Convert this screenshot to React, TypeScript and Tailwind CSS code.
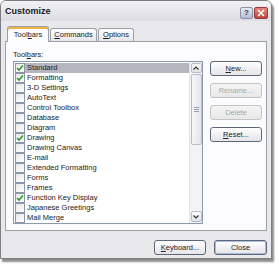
import React from "react"

const items: { name: string; checked: boolean }[] = [
  { name: "Standard", checked: true },
  { name: "Formatting", checked: true },
  { name: "3-D Settings", checked: false },
  { name: "AutoText", checked: false },
  { name: "Control Toolbox", checked: false },
  { name: "Database", checked: false },
  { name: "Diagram", checked: false },
  { name: "Drawing", checked: true },
  { name: "Drawing Canvas", checked: false },
  { name: "E-mail", checked: false },
  { name: "Extended Formatting", checked: false },
  { name: "Forms", checked: false },
  { name: "Frames", checked: false },
  { name: "Function Key Display", checked: true },
  { name: "Japanese Greetings", checked: false },
  { name: "Mail Merge", checked: false },
]

function Check({ on }: { on: boolean }) {
  return (
    <div className="w-[10px] h-[10px] shrink-0 border border-[#8b97a8] bg-gradient-to-br from-[#e8e8e8] to-white flex items-center justify-center">
      {on && (
        <svg width="8" height="8" viewBox="0 0 8 8">
          <path d="M1 4 L3 6 L7 1.5" stroke="#2f9a2f" strokeWidth="1.6" fill="none" />
        </svg>
      )}
    </div>
  )
}

function Btn({
  children,
  disabled,
  primary,
  className = "",
}: {
  children: React.ReactNode
  disabled?: boolean
  primary?: boolean
  className?: string
}) {
  return (
    <div
      className={
        "h-[15px] rounded-[3px] border flex items-center justify-center bg-gradient-to-b " +
        (disabled
          ? "border-[#c4c4c4] from-[#f4f4f4] to-[#e8e8e8] text-[#a8a8a8] "
          : "border-[#5d6777] from-white to-[#e4e4ea] text-[#222] ") +
        (primary ? "shadow-[inset_0_0_0_1px_#a9bddc] " : "") +
        className
      }
    >
      {children}
    </div>
  )
}

export default function App() {
  return (
    <div
      className="w-[279px] h-[266px] bg-white text-[7.5px] leading-[10px] text-[#1a1a1a]"
      style={{ fontFamily: '"Liberation Sans", Arial, sans-serif' }}
    >
      <div className="w-[272px] h-[259px] border border-[#7d7d82] rounded-t-[6px] bg-[#e9e9ec] shadow-[2px_3px_2px_rgba(0,0,0,0.45)] flex flex-col overflow-hidden">
        {/* title bar */}
        <div className="h-[20px] shrink-0 flex items-center pl-[4px] pr-[3px] bg-gradient-to-b from-[#f2f2f6] to-[#dcdce2]">
          <span className="text-[9px] font-bold text-[#1c1c24]">Customize</span>
          <div className="ml-auto flex gap-[1px] mt-[3px]">
            <div className="w-[13px] h-[12px] rounded-[2px] border border-[#8a92a8] bg-gradient-to-b from-[#e6eaf4] to-[#b4bccf] flex items-center justify-center text-[8px] text-[#333] font-bold">
              ?
            </div>
            <div className="w-[14px] h-[12px] rounded-[2px] border border-[#9a3c3a] bg-gradient-to-b from-[#e2867c] to-[#c2433a] flex items-center justify-center">
              <svg width="8" height="8" viewBox="0 0 8 8">
                <path d="M1 1 L7 7 M7 1 L1 7" stroke="white" strokeWidth="1.6" />
              </svg>
            </div>
          </div>
        </div>

        {/* tabs */}
        <div className="flex items-end pl-[6px] mt-[4px] h-[16px] relative z-10">
          <div className="w-[42px] h-[16px] -mb-[1px] bg-[#fcfcfe] border border-b-0 border-[#9aa0a8] rounded-t-[3px] shadow-[inset_0_2px_0_#f0b447] flex items-center justify-center">
            <span>
              Tool<span className="underline">b</span>ars
            </span>
          </div>
          <div className="w-[47px] h-[13px] ml-[1px] bg-gradient-to-b from-white to-[#e6e6ea] border border-b-0 border-[#9aa0a8] rounded-t-[3px] flex items-center justify-center">
            <span>
              <span className="underline">C</span>ommands
            </span>
          </div>
          <div className="w-[36px] h-[13px] ml-[1px] bg-gradient-to-b from-white to-[#e6e6ea] border border-b-0 border-[#9aa0a8] rounded-t-[3px] flex items-center justify-center">
            <span>
              <span className="underline">O</span>ptions
            </span>
          </div>
        </div>

        {/* panel */}
        <div className="ml-[4px] w-[262px] h-[190px] bg-[#fcfcfe] border border-[#9aa0a8] pl-[7px] pt-[8px] flex flex-col">
          <div className="h-[10px]">
            Tool<span className="underline">b</span>ars:
          </div>
          <div className="flex mt-[1px]">
            <div className="w-[190px] h-[163px] border border-[#8a9bb0] bg-white flex">
              <div className="flex-1 pt-[1px] pl-[1px]">
                {items.map((it, i) => (
                  <div
                    key={it.name}
                    className={
                      "h-[10px] flex items-center gap-[2px] pr-[2px] " +
                      (i === 0 ? "bg-[#b6b6be]" : "")
                    }
                  >
                    <Check on={it.checked} />
                    <span className="whitespace-nowrap">{it.name}</span>
                  </div>
                ))}
              </div>
              {/* scrollbar */}
              <div className="w-[13px] bg-[#f3f3f5] border-l border-[#e2e2e6] flex flex-col items-center py-[1px]">
                <div className="w-[11px] h-[10px] border border-[#b8bcc8] rounded-[2px] bg-gradient-to-b from-white to-[#dfe1e8] flex items-center justify-center">
                  <svg width="6" height="4" viewBox="0 0 6 4">
                    <path d="M0.5 3.5 L3 1 L5.5 3.5" stroke="#333" strokeWidth="1.2" fill="none" />
                  </svg>
                </div>
                <div className="w-[11px] h-[71px] mt-[1px] border border-[#b8bcc8] rounded-[2px] bg-gradient-to-r from-[#f6f6f8] to-[#e4e5ea] flex flex-col items-center justify-center gap-[1px]">
                  <div className="w-[5px] h-[1px] bg-[#9aa0ac]" />
                  <div className="w-[5px] h-[1px] bg-[#9aa0ac]" />
                  <div className="w-[5px] h-[1px] bg-[#9aa0ac]" />
                </div>
                <div className="flex-1" />
                <div className="w-[11px] h-[11px] border border-[#b8bcc8] rounded-[2px] bg-gradient-to-b from-white to-[#dfe1e8] flex items-center justify-center">
                  <svg width="6" height="4" viewBox="0 0 6 4">
                    <path d="M0.5 0.5 L3 3 L5.5 0.5" stroke="#333" strokeWidth="1.2" fill="none" />
                  </svg>
                </div>
              </div>
            </div>
            <div className="ml-[7px] w-[52px] flex flex-col gap-[7px]">
              <Btn>
                <span>
                  <span className="underline">N</span>ew...
                </span>
              </Btn>
              <Btn disabled>Rename...</Btn>
              <Btn disabled>Delete</Btn>
              <Btn>
                <span>
                  <span className="underline">R</span>eset...
                </span>
              </Btn>
            </div>
          </div>
        </div>

        {/* footer buttons */}
        <div className="flex justify-end gap-[8px] pr-[4px] mt-[9px]">
          <Btn className="w-[52px]">
            <span>
              <span className="underline">K</span>eyboard...
            </span>
          </Btn>
          <Btn primary className="w-[53px]">
            Close
          </Btn>
        </div>
      </div>
    </div>
  )
}
